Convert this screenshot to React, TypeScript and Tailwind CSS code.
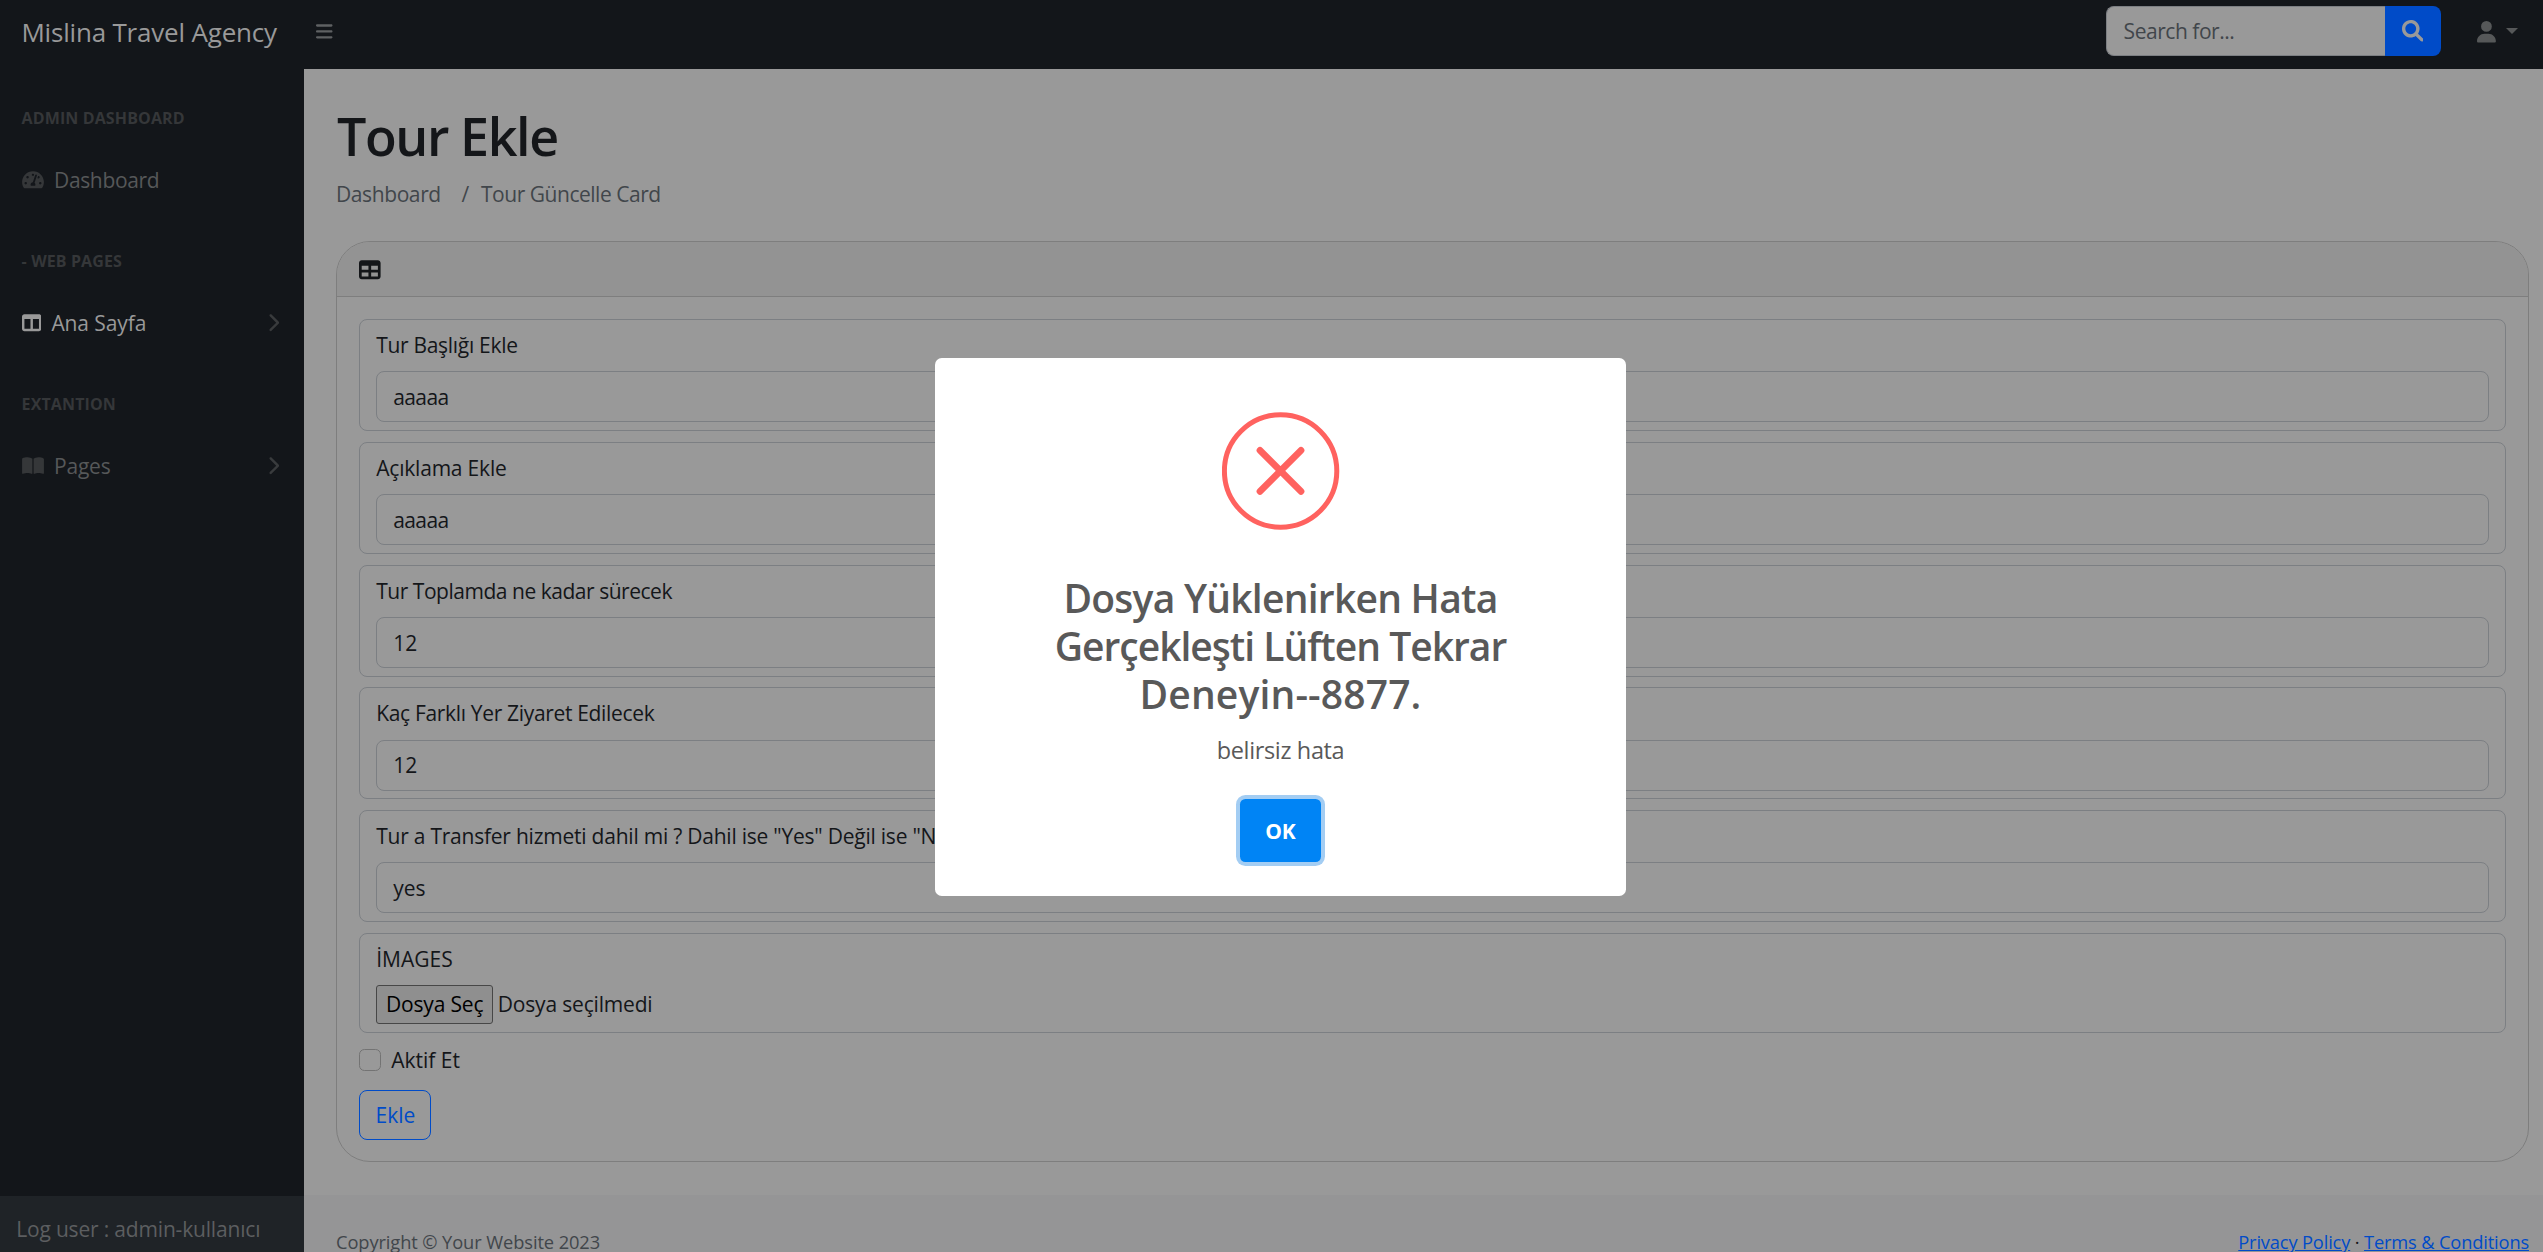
import { FaTachometerAlt } from 'react-icons/fa';
import { FaBars, FaBookOpen, FaChevronRight, FaTable, FaTableColumns, FaUser } from 'react-icons/fa6';
import type { ReactNode } from 'react';

type FieldProps = { label: string; value: string; labelClass: string; valueClass?: string };

function Field({ label, value, labelClass, valueClass = '' }: FieldProps) {
  return (
    <div className="mb-[10.8px] h-[112px] rounded-[8px] border border-[#7c7f83] px-[16.2px] pt-[9px]">
      <label className={`block leading-[32.4px] whitespace-nowrap ${labelClass}`}>{label}</label>
      <div className={`mt-[9.9px] flex h-[51px] items-center rounded-[8px] border border-[#7c7f83] px-[16px] pt-[2px] ${valueClass}`}>
        {value}
      </div>
    </div>
  );
}

function NavHeading({ children }: { children: ReactNode }) {
  return (
    <div className="h-[78.3px] pt-[37px] pl-[21.6px] text-[16px] leading-[24px] font-bold tracking-[0.12px] text-[#353739] uppercase">
      {children}
    </div>
  );
}

function SearchIcon() {
  return (
    <svg viewBox="0 0 512 512" className="size-[21.6px] text-[#999999]" fill="currentColor">
      <path d="M500.3 443.7l-119.7-119.7c27.22-40.41 40.65-90.9 33.46-144.7C401.8 87.79 326.8 13.32 235.2 1.723C99.01-15.51-15.51 99.01 1.724 235.2c11.6 91.64 86.08 166.7 177.6 178.9c53.8 7.189 104.3-6.236 144.7-33.46l119.7 119.7c15.62 15.62 40.95 15.62 56.57 0C515.9 484.7 515.9 459.3 500.3 443.7zM79.1 208c0-70.58 57.42-128 128-128s128 57.42 128 128c0 70.58-57.42 128-128 128S79.1 278.6 79.1 208z" />
    </svg>
  );
}

function Navbar() {
  return (
    <header className="flex h-[69px] shrink-0 bg-[#13161a]">
      <div className="flex h-[62px] w-full items-center">
        <div className="w-[304px] pt-[2px] pl-[21.4px] text-[26px] tracking-[-0.19px] whitespace-nowrap text-[#999999]">
          Mislina Travel Agency
        </div>
        <FaBars className="ml-[12px] h-[18.9px] w-[16.5px] text-[#5f6163]" />
        <div className="ml-auto flex h-[50px] w-[335px]">
          <div className="flex w-[279px] items-center rounded-l-[8px] border border-r-0 border-[#7c7f83] bg-[#999999] pt-[2px] pl-[17px] tracking-[-0.46px] text-[#41464b]">
            Search for...
          </div>
          <div className="flex w-[56px] items-center justify-center rounded-r-[8px] bg-[#004bc8]">
            <SearchIcon />
          </div>
        </div>
        <FaUser className="mt-[2px] ml-[36px] h-[21.6px] w-[18.9px] text-[#565859]" />
        <span className="mr-[25px] ml-[10.5px] border-x-[6px] border-t-[6px] border-x-transparent border-t-[#565859]" />
      </div>
    </header>
  );
}

function Sidebar() {
  return (
    <aside className="flex w-[304px] shrink-0 flex-col bg-[#13161a]">
      <nav>
        <NavHeading>Admin Dashboard</NavHeading>
        <a className="flex h-[64.8px] items-center pl-[22px] tracking-[-0.35px] text-[#565859]">
          <FaTachometerAlt className="mr-[10px] h-[19.4px] w-[22px] text-[#353739]" />
          <span className="pt-[2px]">Dashboard</span>
        </a>
        <NavHeading>- Web Pages</NavHeading>
        <a className="flex h-[64.8px] items-center pr-[25px] pl-[22px] tracking-[-0.1px] text-[#999999]">
          <FaTableColumns className="mr-[10px] size-[19.4px]" />
          <span className="pt-[2px]">Ana Sayfa</span>
          <FaChevronRight className="ml-auto h-[19.4px] w-[12.2px] text-[#393b3d]" />
        </a>
        <NavHeading>Extantion</NavHeading>
        <a className="flex h-[64.8px] items-center pr-[25px] pl-[22px] tracking-[-0.2px] text-[#565859]">
          <FaBookOpen className="mr-[10px] h-[19.4px] w-[22px] text-[#353739]" />
          <span className="pt-[2px]">Pages</span>
          <FaChevronRight className="ml-auto h-[19.4px] w-[12.2px] text-[#393b3d]" />
        </a>
      </nav>
      <div className="mt-auto h-[56px] bg-[#1f2327] pt-[17px] pl-[16.2px] leading-[32.4px] tracking-[-0.18px] whitespace-nowrap text-[#5c5e60]">
        Log user : admin-kullanıcı
      </div>
    </aside>
  );
}

function TourForm() {
  return (
    <section className="rounded-[34px] border border-[#7e7e7e]">
      <div className="flex h-[55px] items-center rounded-t-[33px] border-b border-[#7e7e7e] bg-[#939393] pt-[2px] pl-[22px]">
        <FaTable className="size-[21.6px]" />
      </div>
      <div className="px-[22px] pt-[22px] pb-[21.7px]">
        <Field label="Tur Başlığı Ekle" value="aaaaa" labelClass="tracking-[-0.3px]" valueClass="tracking-[-0.6px]" />
        <Field label="Açıklama Ekle" value="aaaaa" labelClass="tracking-[-0.2px]" valueClass="tracking-[-0.6px]" />
        <Field label="Tur Toplamda ne kadar sürecek" value="12" labelClass="tracking-[-0.47px]" />
        <Field label="Kaç Farklı Yer Ziyaret Edilecek" value="12" labelClass="tracking-[-0.33px]" />
        <Field
          label={'Tur a Transfer hizmeti dahil mi ? Dahil ise "Yes" Değil ise "No" Yazınız'}
          value="yes"
          labelClass="tracking-[-0.23px]"
        />
        <div className="h-[100px] rounded-[8px] border border-[#7c7f83] px-[16.2px] pt-[9px]">
          <label className="block leading-[32.4px]">İMAGES</label>
          <div className="mt-[9.2px] flex h-[39px] items-center tracking-[-0.17px]">
            <button className="h-[39px] w-[117px] rounded-[3px] border border-[#474747] bg-[#8f8f8f] pt-[2px] text-black">
              Dosya Seç
            </button>
            <span className="ml-[4.5px] pt-[2px]">Dosya seçilmedi</span>
          </div>
        </div>
        <div className="mt-[11px] flex h-[32.4px] items-center">
          <span className="mb-px size-[22px] rounded-[5.4px] border border-[#737373]" />
          <span className="ml-[10.2px] pt-[2px]">Aktif Et</span>
        </div>
        <button className="mt-[13.4px] block h-[50px] w-[72px] rounded-[8px] border border-[#004bc8] pt-[2px] pl-px text-[#004bc8]">
          Ekle
        </button>
      </div>
    </section>
  );
}

function ErrorDialog() {
  return (
    <div className="fixed inset-0 flex items-center justify-center pt-[2px] pl-[18px]">
      <div className="flex h-[538px] w-[691px] flex-col items-center rounded-[6.75px] bg-white pt-[54px] text-center text-[#595959]">
        <svg viewBox="0 0 118 118" className="size-[118px] shrink-0" fill="none" stroke="#ff625f">
          <circle cx="58.6" cy="59" r="56.2" strokeWidth="5" />
          <path d="M38 38.3 79 79.3M79 38.3 38 79.3" strokeWidth="6.75" strokeLinecap="round" />
        </svg>
        <h2 className="mt-[43.7px] text-[39px] leading-[48.3px] font-[560]">
          <span className="tracking-[-0.75px]">Dosya Yüklenirken Hata</span>
          <br />
          <span className="tracking-[-1px]">Gerçekleşti Lüften Tekrar</span>
          <br />
          <span className="tracking-[0.15px]">Deneyin--8877.</span>
        </h2>
        <p className="mt-[13.9px] text-[23.5px] leading-[36px] tracking-[-0.35px]">belirsiz hata</p>
        <button className="mt-[30.5px] h-[63px] w-[81px] rounded-[5.4px] bg-[#0084f5] pt-[2px] font-bold text-white ring-4 ring-[#a3cdf3]">
          OK
        </button>
      </div>
    </div>
  );
}

export default function App() {
  return (
    <div className="flex h-screen flex-col overflow-hidden bg-[#999999] font-['Open_Sans',sans-serif] text-[21px] text-[#141619]">
      <Navbar />
      <div className="flex min-h-0 flex-1">
        <Sidebar />
        <div className="flex min-w-0 flex-1 flex-col">
          <main className="flex-1 pt-[34.9px] pr-[14px] pl-[32px]">
            <h1 className="pl-px text-[52px] leading-[64.8px] font-[560] tracking-[-1.4px]">Tour Ekle</h1>
            <div className="mt-[9px] mb-[30.9px] flex leading-[32.4px] text-[#41464b]">
              <span className="w-[125.5px] tracking-[-0.4px]">Dashboard</span>
              <span className="w-[19.5px]">/</span>
              <span className="tracking-[-0.47px]">Tour Güncelle Card</span>
            </div>
            <TourForm />
          </main>
          <footer className="flex h-[57px] shrink-0 justify-between bg-[#959596] pt-[33.4px] pr-[14px] pl-[32px] text-[18.3px] leading-[27px] whitespace-nowrap">
            <span className="tracking-[-0.1px] text-[#41464b]">Copyright © Your Website 2023</span>
            <span className="tracking-[-0.16px]">
              <a className="text-[#004bc8] underline">Privacy Policy</a>
              {' · '}
              <a className="text-[#004bc8] underline">Terms &amp; Conditions</a>
            </span>
          </footer>
        </div>
      </div>
      <ErrorDialog />
    </div>
  );
}
